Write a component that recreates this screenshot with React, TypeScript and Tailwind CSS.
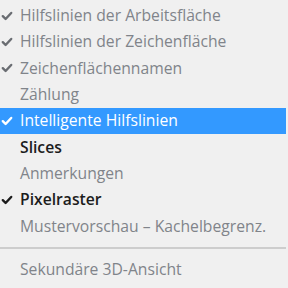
import React from 'react'

type Item = {
  label: string;
  checked?: boolean;
  kind: 'grey' | 'dark' | 'active';
}

const ITEMS: Item[] = [
  { label: 'Hilfslinien der Arbeitsfläche', checked: true, kind: 'grey' },
  { label: 'Hilfslinien der Zeichenfläche', checked: true, kind: 'grey' },
  { label: 'Zeichenflächennamen', checked: true, kind: 'grey' },
  { label: 'Zählung', kind: 'grey' },
  { label: 'Intelligente Hilfslinien', checked: true, kind: 'active' },
  { label: 'Slices', kind: 'dark' },
  { label: 'Anmerkungen', kind: 'grey' },
  { label: 'Pixelraster', checked: true, kind: 'dark' },
  { label: 'Mustervorschau – Kachelbegrenz.', kind: 'grey' },
]

function Check({ color }: { color: string }) {
  return (
    <svg width="12" height="10" viewBox="0 0 12 10" className="shrink-0">
      <path d="M1.8 5.2 L4.6 8 L10.2 2" fill="none" stroke={color} strokeWidth="2.4" strokeLinecap="round" strokeLinejoin="round" />
    </svg>
  )
}

function Row({ item }: { item: Item }) {
  const rowCls =
    item.kind === 'active'
      ? 'bg-[#3399ff] text-white'
      : item.kind === 'dark'
      ? 'text-[#1c1c1c] font-semibold'
      : 'text-[#80848a]'
  const checkColor = item.kind === 'active' ? '#ffffff' : item.kind === 'dark' ? '#1c1c1c' : '#6a6d72'
  return (
    <div className={`flex items-center h-[26.4px] w-[286px] ${rowCls}`}>
      <div className="w-[20px] flex justify-start pl-[1px]">
        {item.checked && <Check color={checkColor} />}
      </div>
      <span className="whitespace-nowrap leading-none">{item.label}</span>
    </div>
  )
}

export default function App() {
  return (
    <div
      className="w-[288px] h-[288px] bg-[#f0f0f0] pt-[2.4px] text-[15.7px] overflow-hidden"
      style={{ fontFamily: '"Open Sans", "Noto Sans", sans-serif' }}
    >
      {ITEMS.map((item) => (
        <Row key={item.label} item={item} />
      ))}
      <div className="h-[17px] flex items-center">
        <div className="h-[2px] w-[286px] bg-[#cdcdcd]" />
      </div>
      <div className="flex items-center h-[26.4px] text-[#80848a]">
        <div className="w-[20px]" />
        <span className="whitespace-nowrap leading-none">Sekundäre 3D-Ansicht</span>
      </div>
    </div>
  )
}
